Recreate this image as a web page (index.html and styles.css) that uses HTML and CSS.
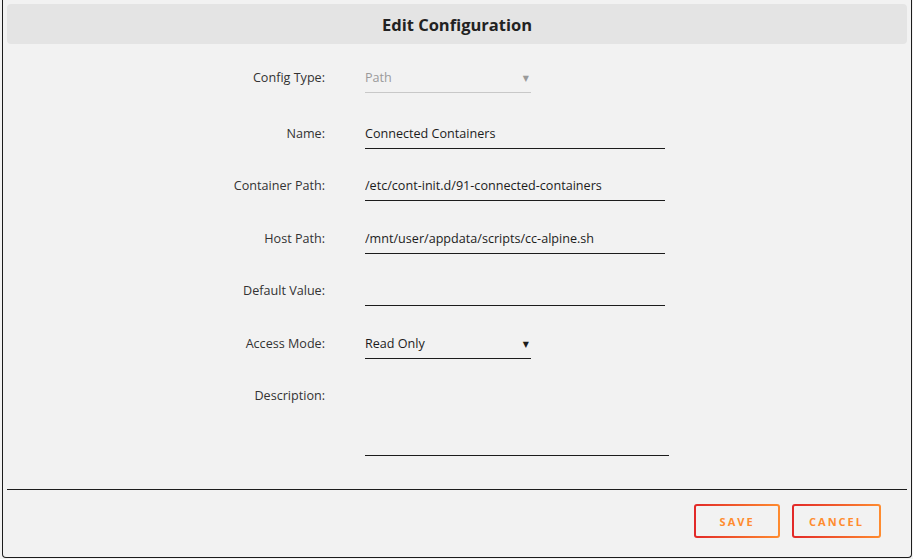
FILE: index.html
```html
<!DOCTYPE html>
<html lang="en">
<head>
    <meta charset="UTF-8">
    <meta name="viewport" content="width=device-width, initial-scale=1.0">
    <title>Edit Configuration</title>
    <link rel="stylesheet" href="styles.css">
</head>
<body>
    <div class="dialog">
        <div class="dialog-title">Edit Configuration</div>

        <form class="config-form">
            <div class="form-row first">
                <label>Config Type:</label>
                <div class="select disabled">
                    <span>Path</span>
                    <span class="arrow">&#9660;</span>
                </div>
            </div>

            <div class="form-row">
                <label for="name">Name:</label>
                <input type="text" id="name" value="Connected Containers">
            </div>

            <div class="form-row">
                <label for="target">Container Path:</label>
                <input type="text" id="target" value="/etc/cont-init.d/91-connected-containers">
            </div>

            <div class="form-row">
                <label for="host">Host Path:</label>
                <input type="text" id="host" value="/mnt/user/appdata/scripts/cc-alpine.sh">
            </div>

            <div class="form-row">
                <label for="default">Default Value:</label>
                <input type="text" id="default" value="">
            </div>

            <div class="form-row">
                <label>Access Mode:</label>
                <div class="select">
                    <span>Read Only</span>
                    <span class="arrow">&#9660;</span>
                </div>
            </div>

            <div class="form-row">
                <label for="desc">Description:</label>
                <textarea id="desc"></textarea>
            </div>
        </form>

        <div class="dialog-buttons">
            <button type="button">Save</button>
            <button type="button">Cancel</button>
        </div>
    </div>
</body>
</html>
```

FILE: styles.css
```css
body {
    margin: 0;
    background-color: #f2f2f2;
    font-family: "Open Sans", "DejaVu Sans", sans-serif;
    font-size: 12.6px;
    color: #1c1c1c;
}
.dialog {
    box-sizing: border-box;
    height: 558px;
    margin: 0 1px 0 2px;
    border: 1px solid #1c1c1c;
    border-top: none;
    border-radius: 0 0 4px 4px;
    background-color: #f2f2f2;
    padding-top: 4px;
}
.dialog-title {
    margin: 0 4px;
    height: 40px;
    line-height: 42px;
    background-color: #e4e4e4;
    border-radius: 4px;
    text-align: center;
    font-size: 16.5px;
    font-weight: bold;
    color: #222;
}
.config-form {
    padding-top: 18.5px;
    height: 413px;
    box-sizing: border-box;
}
.form-row {
    display: flex;
    align-items: flex-start;
    margin-bottom: 22.5px;
}
.form-row.first {
    margin-bottom: 26px;
}
.form-row label {
    width: 322px;
    flex: none;
    text-align: right;
    line-height: 30px;
    margin-right: 40px;
    color: #333;
}
input[type="text"],
.select,
textarea {
    box-sizing: border-box;
    height: 30px;
    border: none;
    border-bottom: 1px solid #1c1c1c;
    background: transparent;
    font: inherit;
    color: #1c1c1c;
    padding: 0;
    outline: none;
}
input[type="text"] {
    width: 300px;
}
.select {
    width: 166px;
    display: flex;
    justify-content: space-between;
    align-items: center;
}
.select.disabled {
    color: #9a9a9a;
    border-bottom-color: #c8c8c8;
}
.arrow {
    font-size: 8px;
    margin-right: 2px;
}
textarea {
    width: 304px;
    height: 74.5px;
    resize: none;
    line-height: 30px;
}
.dialog-buttons {
    margin: 32px 4px 0;
    border-top: 1px solid #1c1c1c;
    padding: 14px 26px 0 0;
    display: flex;
    justify-content: flex-end;
    gap: 12px;
}
.dialog-buttons button {
    height: 34px;
    min-width: 86px;
    padding: 0 15px;
    border: 2px solid transparent;
    border-radius: 3px;
    background: linear-gradient(#f2f2f2, #f2f2f2) padding-box,
                linear-gradient(90deg, #e22828, #ff8c2f) border-box;
    color: #ff8c2f;
    font-family: inherit;
    font-size: 11px;
    font-weight: bold;
    letter-spacing: 2px;
    text-transform: uppercase;
    cursor: pointer;
}
```
